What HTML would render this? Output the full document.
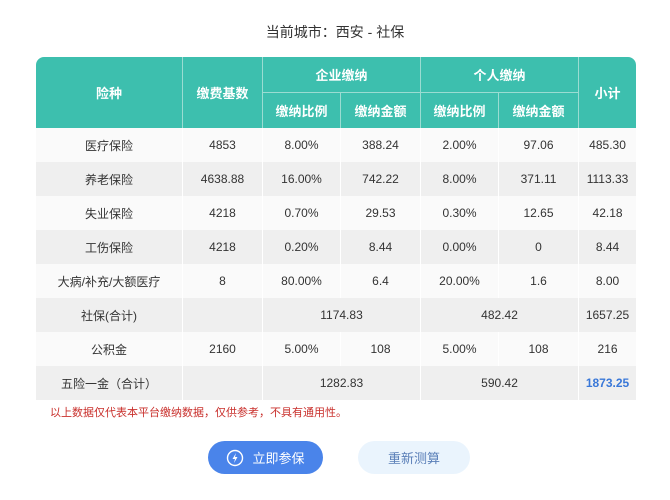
<!DOCTYPE html><html><head><meta charset="utf-8"><style>
body{margin:0;width:670px;height:500px;background:#fff;font-family:"Liberation Sans","Noto Sans CJK SC",sans-serif;position:relative;overflow:hidden}
.t{position:absolute;top:22px;width:100%;text-align:center;font-size:14px;color:#333}
table{position:absolute;left:36px;top:57px;width:600px;border-collapse:separate;border-spacing:0;font-size:12px;color:#333;table-layout:fixed}
th{background:#3dbfae;color:#fff;font-weight:bold;font-size:13px;border-left:1px solid #9adcd2;height:35px;padding:0}
thead tr:nth-child(2) th{border-top:1px solid #9adcd2}
td{text-align:center;height:34px;padding:0;border-left:1px solid #fff}
td:first-child,th:first-child{border-left:none}
tbody tr:nth-child(odd) td{background:#fafafa}
tbody tr:nth-child(even) td{background:#efefef}
.note{position:absolute;left:50px;top:404px;font-size:11px;color:#c9302c}
.b1{position:absolute;left:208px;top:441px;width:115px;height:33px;border-radius:17px;background:#4a84ea;color:#fff;font-size:13px;display:flex;align-items:center;justify-content:center;gap:8px}
.b2{position:absolute;left:358px;top:441px;width:112px;height:33px;border-radius:17px;background:#eaf4fd;color:#5a7fb8;font-size:13px;display:flex;align-items:center;justify-content:center}
</style></head><body>
<div class="t">当前城市：西安 - 社保</div>
<table>
<colgroup><col style="width:146px"><col style="width:80px"><col style="width:78px"><col style="width:80px"><col style="width:78px"><col style="width:80px"><col style="width:58px"></colgroup>
<thead><tr><th rowspan="2" style="border-top-left-radius:8px">险种</th><th rowspan="2">缴费基数</th><th colspan="2">企业缴纳</th><th colspan="2">个人缴纳</th><th rowspan="2" style="border-top-right-radius:8px">小计</th></tr>
<tr><th style="border-left:1px solid #9adcd2">缴纳比例</th><th>缴纳金额</th><th>缴纳比例</th><th>缴纳金额</th></tr></thead>
<tbody>
<tr><td>医疗保险</td><td>4853</td><td>8.00%</td><td>388.24</td><td>2.00%</td><td>97.06</td><td>485.30</td></tr>
<tr><td>养老保险</td><td>4638.88</td><td>16.00%</td><td>742.22</td><td>8.00%</td><td>371.11</td><td>1113.33</td></tr>
<tr><td>失业保险</td><td>4218</td><td>0.70%</td><td>29.53</td><td>0.30%</td><td>12.65</td><td>42.18</td></tr>
<tr><td>工伤保险</td><td>4218</td><td>0.20%</td><td>8.44</td><td>0.00%</td><td>0</td><td>8.44</td></tr>
<tr><td>大病/补充/大额医疗</td><td>8</td><td>80.00%</td><td>6.4</td><td>20.00%</td><td>1.6</td><td>8.00</td></tr>
<tr><td>社保(合计)</td><td></td><td colspan="2">1174.83</td><td colspan="2">482.42</td><td>1657.25</td></tr>
<tr><td>公积金</td><td>2160</td><td>5.00%</td><td>108</td><td>5.00%</td><td>108</td><td>216</td></tr>
<tr><td>五险一金（合计）</td><td></td><td colspan="2">1282.83</td><td colspan="2">590.42</td><td style="color:#3a78d8;font-weight:bold">1873.25</td></tr>
</tbody></table>
<div class="note">以上数据仅代表本平台缴纳数据，仅供参考，不具有通用性。</div>
<div class="b1"><svg width="18" height="18" viewBox="0 0 18 18"><circle cx="9" cy="9" r="7.5" fill="none" stroke="#fff" stroke-width="1.4"/><path d="M10 4L6.5 10H9L8 14L11.5 8H9Z" fill="#fff"/></svg>立即参保</div>
<div class="b2">重新测算</div>
</body></html>
